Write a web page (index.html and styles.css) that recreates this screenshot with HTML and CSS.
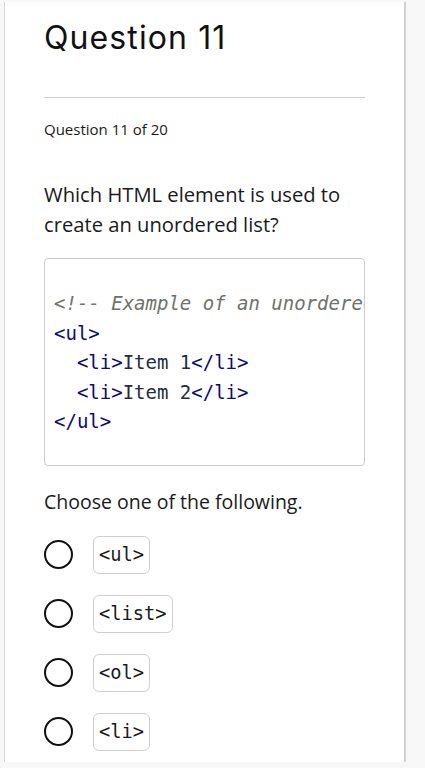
FILE: index.html
```html
<!DOCTYPE html>
<html lang="en">
<head>
<meta charset="utf-8">
<title>Question 11</title>
<link rel="stylesheet" href="styles.css">
</head>
<body>
<main class="card">
  <h1 class="title">Question 11</h1>
  <hr class="rule">
  <p class="counter">Question 11 of 20</p>
  <p class="prompt">Which HTML element is used to create an unordered list?</p>
  <pre class="code"><span class="cm">&lt;!-- Example of an unordered list --&gt;</span>
<span class="tg">&lt;ul&gt;</span>
  <span class="tg">&lt;li&gt;</span>Item 1<span class="tg">&lt;/li&gt;</span>
  <span class="tg">&lt;li&gt;</span>Item 2<span class="tg">&lt;/li&gt;</span>
<span class="tg">&lt;/ul&gt;</span></pre>
  <p class="instr">Choose one of the following.</p>
  <ul class="options">
    <li class="option"><span class="radio"></span><code class="chip">&lt;ul&gt;</code></li>
    <li class="option"><span class="radio"></span><code class="chip">&lt;list&gt;</code></li>
    <li class="option"><span class="radio"></span><code class="chip">&lt;ol&gt;</code></li>
    <li class="option"><span class="radio"></span><code class="chip">&lt;li&gt;</code></li>
  </ul>
</main>
</body>
</html>
```

FILE: styles.css
```css
html, body {
  margin: 0;
  padding: 0;
}
body {
  background: #f8f8f8;
  padding-top: 2px;
  padding-left: 4px;
  height: 768px;
  box-sizing: border-box;
  overflow: hidden;
  font-family: "Open Sans", "Noto Sans", sans-serif;
  color: #1a1a1a;
}
.card {
  width: 402px;
  height: 760px;
  box-sizing: border-box;
  background: #fff;
  border-left: 1px solid #d6d6d6;
  border-right: 2px solid #d0d0d0;
  padding: 0 39px;
  display: flex;
  flex-direction: column;
}
.title {
  margin: 17px 0 0;
  font-family: "Inter", "Liberation Sans", sans-serif;
  font-weight: 400;
  font-size: 32px;
  line-height: 38px;
  color: #111;
  letter-spacing: 1.1px;
}
.rule {
  margin: 40px 0 0;
  border: 0;
  border-top: 1px solid #cfcfcf;
  height: 0;
}
.counter {
  margin: 21px 0 0;
  font-size: 15px;
  font-weight: 500;
  line-height: 20px;
  color: #1a1a1a;
}
.prompt {
  margin: 40px 0 0;
  font-size: 20.2px;
  font-weight: 500;
  line-height: 30px;
  color: #1a1a1a;
}
.code {
  margin: 19px 0 0;
  border: 1px solid #cccccc;
  border-radius: 4px;
  padding: 30px 0 28px 9px;
  font-family: "DejaVu Sans Mono", monospace;
  font-size: 19px;
  line-height: 29.5px;
  color: #1f2d3d;
  overflow: hidden;
  white-space: pre;
}
.cm {
  color: #6e7268;
  font-style: italic;
}
.tg {
  color: #0a0a80;
}
.instr {
  margin: 21px 0 0;
  font-size: 19.5px;
  line-height: 30px;
  color: #1a1a1a;
}
.options {
  list-style: none;
  margin: 19px 0 0;
  padding: 0;
  display: flex;
  flex-direction: column;
  gap: 21px;
}
.option {
  display: flex;
  align-items: center;
  gap: 20px;
}
.radio {
  width: 29px;
  height: 29px;
  box-sizing: border-box;
  border: 2.6px solid #111;
  border-radius: 50%;
  flex: none;
}
.chip {
  font-family: "DejaVu Sans Mono", monospace;
  font-size: 18.7px;
  line-height: 28px;
  padding: 4px 5px;
  border: 1px solid #cfcfcf;
  border-radius: 6px;
  color: #1a1a1a;
}
```
